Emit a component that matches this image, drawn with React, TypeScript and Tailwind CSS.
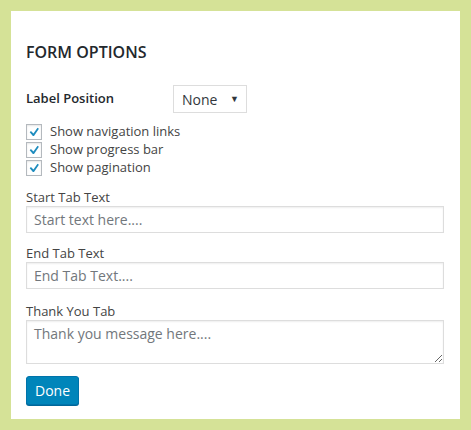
import React from 'react';

const Check = ({ label }: { label: string }) => (
  <label className="flex items-center h-[18px] gap-2">
    <span className="w-4 h-4 border border-[#b4b9be] bg-white flex items-center justify-center shadow-[inset_0_1px_2px_rgba(0,0,0,0.1)]">
      <svg width="16" height="16" viewBox="0 0 20 20">
        <path d="M15 3.9l2 1.4-7 10.4H8.4L3.9 10.4l1.8-1.7 3.5 3.3z" fill="#1e8cbe" />
      </svg>
    </span>
    <span className="text-[13px] text-[#444]">{label}</span>
  </label>
);

export default function App() {
  return (
    <div className="w-[471px] h-[430px] bg-[#d5e297] p-[11px] font-['Open_Sans',sans-serif]">
      <div className="bg-white h-[408px] px-[15px] pt-[31px]">
        <h2 className="text-[16px] leading-[20px] font-semibold text-[#23282d]">FORM OPTIONS</h2>

        <div className="flex items-center mt-[23px]">
          <span className="w-[147px] text-[13px] font-semibold text-[#23282d]">Label Position</span>
          <div className="w-[74px] h-[28px] border border-[#ddd] flex items-center justify-between pl-[8px] pr-[7px] text-[14px] text-[#32373c]">
            <span>None</span>
            <span className="text-[9px]">▼</span>
          </div>
        </div>

        <div className="mt-[10px] flex flex-col">
          <Check label="Show navigation links" />
          <Check label="Show progress bar" />
          <Check label="Show pagination" />
        </div>

        <div className="mt-[11px] text-[13px] leading-[18px] text-[#444]">Start Tab Text</div>
        <input
          className="mt-0 w-[418px] h-[27px] border border-[#ddd] shadow-[inset_0_1px_2px_rgba(0,0,0,0.07)] px-[7px] text-[14px] placeholder:text-[#72777c] outline-none"
          placeholder="Start text here...."
        />

        <div className="mt-[11px] text-[13px] leading-[18px] text-[#444]">End Tab Text</div>
        <input
          className="mt-0 w-[418px] h-[27px] border border-[#ddd] shadow-[inset_0_1px_2px_rgba(0,0,0,0.07)] px-[7px] text-[14px] placeholder:text-[#72777c] outline-none"
          placeholder="End Tab Text...."
        />

        <div className="mt-[13px] text-[13px] leading-[18px] text-[#444]">Thank You Tab</div>
        <textarea
          className="block mt-0 w-[418px] h-[44px] border border-[#ddd] shadow-[inset_0_1px_2px_rgba(0,0,0,0.07)] px-[7px] py-[2px] text-[14px] placeholder:text-[#72777c] outline-none"
          placeholder="Thank you message here...."
        />

        <button className="mt-[12px] h-[29px] px-[8px] rounded-[3px] bg-[#0085ba] border border-[#0073aa] shadow-[0_1px_0_#006799] text-white text-[14px]">
          Done
        </button>
      </div>
    </div>
  );
}
